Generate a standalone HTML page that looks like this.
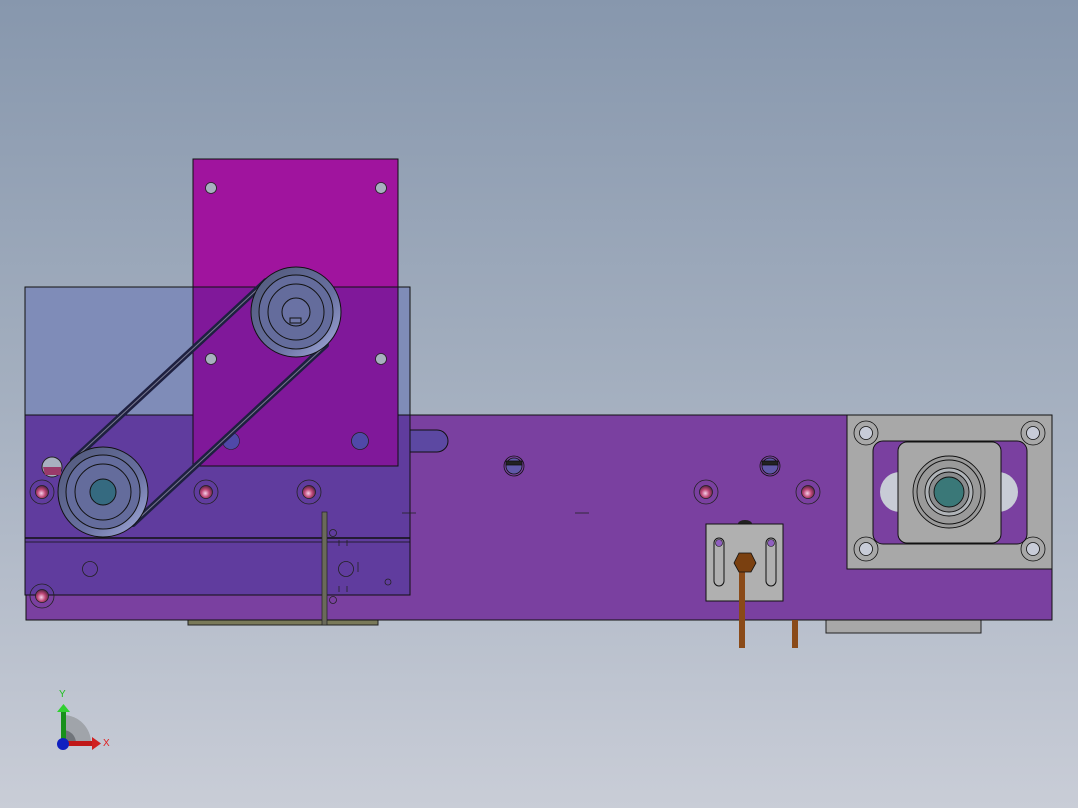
<!DOCTYPE html>
<html><head><meta charset="utf-8"><style>
html,body{margin:0;padding:0;width:1078px;height:808px;overflow:hidden}
svg{display:block}
</style></head><body>
<svg width="1078" height="808" viewBox="0 0 1078 808" xmlns="http://www.w3.org/2000/svg">
<defs>
<linearGradient id="bg" x1="0" y1="0" x2="0" y2="1">
<stop offset="0" stop-color="#8797ad"/><stop offset="0.5" stop-color="#a5b0c0"/><stop offset="1" stop-color="#c9cdd7"/>
</linearGradient>
<radialGradient id="rh" cx="0.45" cy="0.6" r="0.6"><stop offset="0" stop-color="#f4d0e8"/><stop offset="0.5" stop-color="#c04878"/><stop offset="1" stop-color="#502040"/></radialGradient>
<linearGradient id="pul" x1="0" y1="0" x2="1" y2="1"><stop offset="0" stop-color="#505878"/><stop offset="0.6" stop-color="#6870a0"/><stop offset="1" stop-color="#a8b0e0"/></linearGradient>
</defs>
<rect width="1078" height="808" fill="url(#bg)"/>

<!-- bottom strips -->
<rect x="188" y="617" width="190" height="8" fill="#7a7a5a" stroke="#222" stroke-width="1"/>
<rect x="826" y="617" width="155" height="16" fill="#a8a8a8" stroke="#222" stroke-width="1"/>
<!-- main bar -->
<rect x="26" y="415" width="1026" height="205" fill="#7a40a0" stroke="#111" stroke-width="1"/>
<!-- slot -->
<path d="M398 430 H437 A11 11 0 0 1 437 452 H398 Z" fill="#5c48a2" stroke="#111"/>
<!-- transparent box -->
<rect x="25" y="287" width="385" height="128" fill="#7f8cb8" stroke="#111"/>
<rect x="25" y="415" width="385" height="180" fill="#603c9e" stroke="#111"/>
<line x1="25" y1="538" x2="410" y2="538" stroke="#111" stroke-width="1.5"/>
<line x1="25" y1="542" x2="410" y2="542" stroke="#111" stroke-width="0.8"/>
<!-- magenta plate -->
<rect x="193" y="159" width="205" height="128" fill="#a0149e" stroke="#111"/>
<rect x="193" y="287" width="205" height="179" fill="#80189a" stroke="#111"/>
<g fill="#a8b0c0" stroke="#222" stroke-width="0.8">
<circle cx="211" cy="188" r="5.5"/><circle cx="381" cy="188" r="5.5"/>
<circle cx="211" cy="359" r="5.5"/><circle cx="381" cy="359" r="5.5"/>
</g>
<circle cx="231" cy="441" r="8.5" fill="#5048a8" stroke="#222" stroke-width="0.6"/>
<circle cx="360" cy="441" r="8.5" fill="#5048a8" stroke="#222" stroke-width="0.8"/>

<!-- red countersunk holes -->
<g stroke="#222" stroke-width="0.8">
<g><circle cx="42" cy="492" r="12" fill="none"/><circle cx="42" cy="492" r="6.5" fill="url(#rh)"/></g>
<g><circle cx="206" cy="492" r="12" fill="none"/><circle cx="206" cy="492" r="6.5" fill="url(#rh)"/></g>
<g><circle cx="309" cy="492" r="12" fill="none"/><circle cx="309" cy="492" r="6.5" fill="url(#rh)"/></g>
<g><circle cx="706" cy="492" r="12" fill="none"/><circle cx="706" cy="492" r="6.5" fill="url(#rh)"/></g>
<g><circle cx="808" cy="492" r="12" fill="none"/><circle cx="808" cy="492" r="6.5" fill="url(#rh)"/></g>
<g><circle cx="42" cy="596" r="12" fill="none"/><circle cx="42" cy="596" r="6.5" fill="url(#rh)"/></g>
</g>
<!-- screw slots -->
<g stroke="#111" stroke-width="0.8">
<circle cx="514" cy="466" r="10" fill="none"/><circle cx="514" cy="466" r="8" fill="#6058a8"/><rect x="506" y="461" width="16" height="4" fill="#222"/>
<circle cx="770" cy="466" r="10" fill="none"/><circle cx="770" cy="466" r="8" fill="#6058a8"/><rect x="762" y="461" width="16" height="4" fill="#222"/>
</g>
<circle cx="52" cy="467" r="10" fill="#a8b0c0" stroke="#222"/>
<path d="M43 467 H61 V475 H45 Z" fill="#9a3a6a"/>
<circle cx="90" cy="569" r="7.5" fill="none" stroke="#222" stroke-width="0.8"/>
<circle cx="346" cy="569" r="7.5" fill="none" stroke="#222" stroke-width="0.8"/>
<circle cx="333" cy="533" r="3.5" fill="none" stroke="#222" stroke-width="0.8"/>
<circle cx="333" cy="600" r="3.5" fill="none" stroke="#222" stroke-width="0.8"/>
<circle cx="388" cy="582" r="3" fill="none" stroke="#222" stroke-width="0.8"/>
<g stroke="#222" stroke-width="0.8">
<line x1="339" y1="540" x2="339" y2="546"/><line x1="347" y1="540" x2="347" y2="546"/>
<line x1="339" y1="586" x2="339" y2="592"/><line x1="347" y1="586" x2="347" y2="592"/>
<line x1="358" y1="562" x2="358" y2="572"/>
<line x1="402" y1="513" x2="416" y2="513"/><line x1="575" y1="513" x2="589" y2="513"/>
</g>
<rect x="322" y="512" width="5" height="113" fill="#6a6a5a" stroke="#222" stroke-width="0.7"/>

<!-- belt -->
<g stroke="#1e2040" stroke-width="6" stroke-linecap="round">
<line x1="73" y1="460" x2="266" y2="281"/>
<line x1="133" y1="524" x2="326" y2="345"/>
</g>
<g stroke="#7a7a90" stroke-width="1">
<line x1="75" y1="458" x2="264" y2="283"/>
<line x1="135" y1="522" x2="324" y2="347"/>
</g>
<!-- pulleys -->
<g stroke="#111" stroke-width="1">
<circle cx="296" cy="312" r="45" fill="url(#pul)"/>
<circle cx="296" cy="312" r="37" fill="#646c9c"/>
<circle cx="296" cy="312" r="28" fill="#646c9c"/>
<circle cx="296" cy="312" r="14" fill="#6a72a4"/>
<rect x="290" y="318" width="11" height="5" fill="#7078a8"/>
<circle cx="103" cy="492" r="45" fill="url(#pul)"/>
<circle cx="103" cy="492" r="37" fill="#646c9c"/>
<circle cx="103" cy="492" r="28" fill="#646c9c"/>
<circle cx="103" cy="492" r="13" fill="#356a80"/>
</g>

<!-- small bracket -->
<ellipse cx="745" cy="524" rx="7" ry="4" fill="#222"/>
<rect x="706" y="524" width="77" height="77" fill="#b0b0b0" stroke="#111"/>
<rect x="714" y="538" width="10" height="48" rx="5" fill="none" stroke="#111"/>
<rect x="766" y="538" width="10" height="48" rx="5" fill="none" stroke="#111"/>
<circle cx="719" cy="543" r="3.5" fill="#9060c0" stroke="#111" stroke-width="0.6"/>
<circle cx="771" cy="543" r="3.5" fill="#9060c0" stroke="#111" stroke-width="0.6"/>
<rect x="739" y="568" width="6" height="80" fill="#8a4a18"/>
<rect x="792" y="620" width="6" height="28" fill="#8a4a18"/>
<polygon points="739,553 751,553 756,563 751,572 739,572 734,563" fill="#7a4010" stroke="#111" stroke-width="0.8"/>

<!-- motor block -->
<rect x="847" y="415" width="205" height="154" fill="#a8a8a8" stroke="#111"/>
<rect x="873" y="441" width="154" height="103" rx="10" fill="#7a40a0" stroke="#111"/>
<circle cx="900" cy="492" r="20" fill="#c8ccd6"/>
<circle cx="998" cy="492" r="20" fill="#c8ccd6"/>
<rect x="898" y="442" width="103" height="101" rx="9" fill="#a8a8a8" stroke="#111"/>
<g stroke="#111" stroke-width="0.9">
<circle cx="949" cy="492" r="36" fill="#9a9a9a"/>
<circle cx="949" cy="492" r="32" fill="none"/>
<circle cx="949" cy="492" r="24" fill="#b0b4b8"/>
<circle cx="949" cy="492" r="20" fill="#8a8c8e"/>
<circle cx="949" cy="492" r="15" fill="#3a7878"/>
</g>
<g stroke="#111" stroke-width="0.8">
<circle cx="866" cy="433" r="12" fill="none"/><circle cx="866" cy="433" r="6.5" fill="#c8ccd8"/>
<circle cx="1033" cy="433" r="12" fill="none"/><circle cx="1033" cy="433" r="6.5" fill="#c8ccd8"/>
<circle cx="866" cy="549" r="12" fill="none"/><circle cx="866" cy="549" r="6.5" fill="#c8ccd8"/>
<circle cx="1033" cy="549" r="12" fill="none"/><circle cx="1033" cy="549" r="6.5" fill="#c8ccd8"/>
</g>

<!-- axis triad -->
<path d="M63 743 V715 A28 28 0 0 1 91 743 Z" fill="#a0a4aa"/>
<path d="M63 743 V730 A13 13 0 0 1 76 743 Z" fill="#70747a"/>
<rect x="61" y="709" width="5" height="34" fill="#18901a"/>
<polygon points="57,712 70,712 63.5,704" fill="#30d030"/>
<rect x="63" y="741" width="30" height="5" fill="#c01818"/>
<polygon points="92,737 92,750 101,743.5" fill="#d02020"/>
<circle cx="63" cy="744" r="6" fill="#1020c0"/>
<text x="59" y="697" font-family="Liberation Sans, sans-serif" font-size="10" fill="#20c020">Y</text>
<text x="103" y="746" font-family="Liberation Sans, sans-serif" font-size="10" fill="#e02020">X</text>
</svg>
</body></html>
